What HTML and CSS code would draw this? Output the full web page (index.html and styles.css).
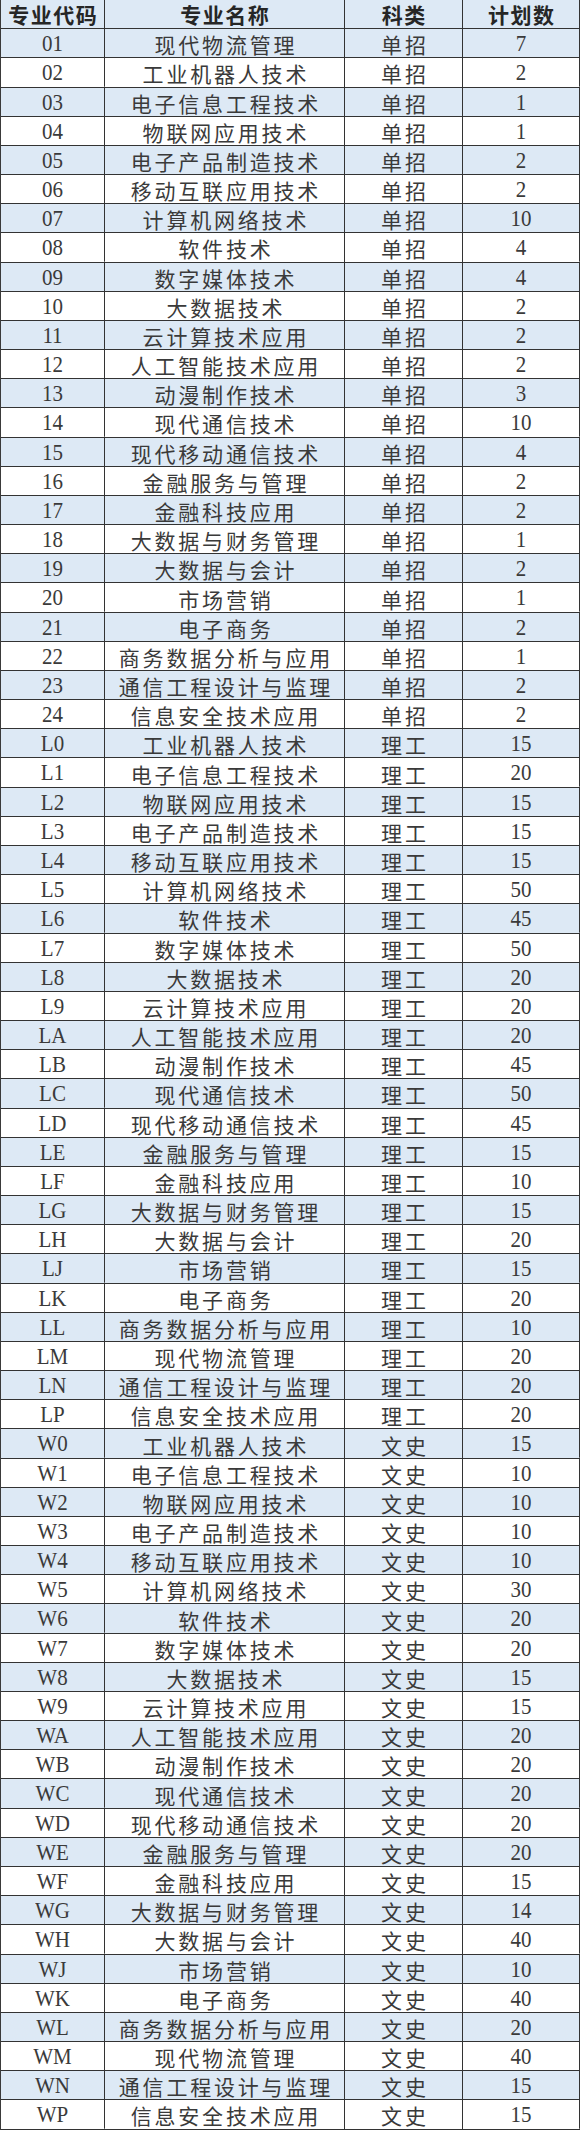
FILE: index.html
```html
<!DOCTYPE html>
<html lang="zh-CN">
<head>
<meta charset="utf-8">
<title>专业招生计划</title>
<link rel="stylesheet" href="styles.css">
</head>
<body>
<div class="sheet">
<div class="row head"><div class="c">专业代码</div><div class="c">专业名称</div><div class="c">科类</div><div class="c">计划数</div></div>
<div class="row"><div class="c n">01</div><div class="c">现代物流管理</div><div class="c">单招</div><div class="c n">7</div></div>
<div class="row"><div class="c n">02</div><div class="c">工业机器人技术</div><div class="c">单招</div><div class="c n">2</div></div>
<div class="row"><div class="c n">03</div><div class="c">电子信息工程技术</div><div class="c">单招</div><div class="c n">1</div></div>
<div class="row"><div class="c n">04</div><div class="c">物联网应用技术</div><div class="c">单招</div><div class="c n">1</div></div>
<div class="row"><div class="c n">05</div><div class="c">电子产品制造技术</div><div class="c">单招</div><div class="c n">2</div></div>
<div class="row"><div class="c n">06</div><div class="c">移动互联应用技术</div><div class="c">单招</div><div class="c n">2</div></div>
<div class="row"><div class="c n">07</div><div class="c">计算机网络技术</div><div class="c">单招</div><div class="c n">10</div></div>
<div class="row"><div class="c n">08</div><div class="c">软件技术</div><div class="c">单招</div><div class="c n">4</div></div>
<div class="row"><div class="c n">09</div><div class="c">数字媒体技术</div><div class="c">单招</div><div class="c n">4</div></div>
<div class="row"><div class="c n">10</div><div class="c">大数据技术</div><div class="c">单招</div><div class="c n">2</div></div>
<div class="row"><div class="c n">11</div><div class="c">云计算技术应用</div><div class="c">单招</div><div class="c n">2</div></div>
<div class="row"><div class="c n">12</div><div class="c">人工智能技术应用</div><div class="c">单招</div><div class="c n">2</div></div>
<div class="row"><div class="c n">13</div><div class="c">动漫制作技术</div><div class="c">单招</div><div class="c n">3</div></div>
<div class="row"><div class="c n">14</div><div class="c">现代通信技术</div><div class="c">单招</div><div class="c n">10</div></div>
<div class="row"><div class="c n">15</div><div class="c">现代移动通信技术</div><div class="c">单招</div><div class="c n">4</div></div>
<div class="row"><div class="c n">16</div><div class="c">金融服务与管理</div><div class="c">单招</div><div class="c n">2</div></div>
<div class="row"><div class="c n">17</div><div class="c">金融科技应用</div><div class="c">单招</div><div class="c n">2</div></div>
<div class="row"><div class="c n">18</div><div class="c">大数据与财务管理</div><div class="c">单招</div><div class="c n">1</div></div>
<div class="row"><div class="c n">19</div><div class="c">大数据与会计</div><div class="c">单招</div><div class="c n">2</div></div>
<div class="row"><div class="c n">20</div><div class="c">市场营销</div><div class="c">单招</div><div class="c n">1</div></div>
<div class="row"><div class="c n">21</div><div class="c">电子商务</div><div class="c">单招</div><div class="c n">2</div></div>
<div class="row"><div class="c n">22</div><div class="c">商务数据分析与应用</div><div class="c">单招</div><div class="c n">1</div></div>
<div class="row"><div class="c n">23</div><div class="c">通信工程设计与监理</div><div class="c">单招</div><div class="c n">2</div></div>
<div class="row"><div class="c n">24</div><div class="c">信息安全技术应用</div><div class="c">单招</div><div class="c n">2</div></div>
<div class="row"><div class="c n">L0</div><div class="c">工业机器人技术</div><div class="c">理工</div><div class="c n">15</div></div>
<div class="row"><div class="c n">L1</div><div class="c">电子信息工程技术</div><div class="c">理工</div><div class="c n">20</div></div>
<div class="row"><div class="c n">L2</div><div class="c">物联网应用技术</div><div class="c">理工</div><div class="c n">15</div></div>
<div class="row"><div class="c n">L3</div><div class="c">电子产品制造技术</div><div class="c">理工</div><div class="c n">15</div></div>
<div class="row"><div class="c n">L4</div><div class="c">移动互联应用技术</div><div class="c">理工</div><div class="c n">15</div></div>
<div class="row"><div class="c n">L5</div><div class="c">计算机网络技术</div><div class="c">理工</div><div class="c n">50</div></div>
<div class="row"><div class="c n">L6</div><div class="c">软件技术</div><div class="c">理工</div><div class="c n">45</div></div>
<div class="row"><div class="c n">L7</div><div class="c">数字媒体技术</div><div class="c">理工</div><div class="c n">50</div></div>
<div class="row"><div class="c n">L8</div><div class="c">大数据技术</div><div class="c">理工</div><div class="c n">20</div></div>
<div class="row"><div class="c n">L9</div><div class="c">云计算技术应用</div><div class="c">理工</div><div class="c n">20</div></div>
<div class="row"><div class="c n">LA</div><div class="c">人工智能技术应用</div><div class="c">理工</div><div class="c n">20</div></div>
<div class="row"><div class="c n">LB</div><div class="c">动漫制作技术</div><div class="c">理工</div><div class="c n">45</div></div>
<div class="row"><div class="c n">LC</div><div class="c">现代通信技术</div><div class="c">理工</div><div class="c n">50</div></div>
<div class="row"><div class="c n">LD</div><div class="c">现代移动通信技术</div><div class="c">理工</div><div class="c n">45</div></div>
<div class="row"><div class="c n">LE</div><div class="c">金融服务与管理</div><div class="c">理工</div><div class="c n">15</div></div>
<div class="row"><div class="c n">LF</div><div class="c">金融科技应用</div><div class="c">理工</div><div class="c n">10</div></div>
<div class="row"><div class="c n">LG</div><div class="c">大数据与财务管理</div><div class="c">理工</div><div class="c n">15</div></div>
<div class="row"><div class="c n">LH</div><div class="c">大数据与会计</div><div class="c">理工</div><div class="c n">20</div></div>
<div class="row"><div class="c n">LJ</div><div class="c">市场营销</div><div class="c">理工</div><div class="c n">15</div></div>
<div class="row"><div class="c n">LK</div><div class="c">电子商务</div><div class="c">理工</div><div class="c n">20</div></div>
<div class="row"><div class="c n">LL</div><div class="c">商务数据分析与应用</div><div class="c">理工</div><div class="c n">10</div></div>
<div class="row"><div class="c n">LM</div><div class="c">现代物流管理</div><div class="c">理工</div><div class="c n">20</div></div>
<div class="row"><div class="c n">LN</div><div class="c">通信工程设计与监理</div><div class="c">理工</div><div class="c n">20</div></div>
<div class="row"><div class="c n">LP</div><div class="c">信息安全技术应用</div><div class="c">理工</div><div class="c n">20</div></div>
<div class="row"><div class="c n">W0</div><div class="c">工业机器人技术</div><div class="c">文史</div><div class="c n">15</div></div>
<div class="row"><div class="c n">W1</div><div class="c">电子信息工程技术</div><div class="c">文史</div><div class="c n">10</div></div>
<div class="row"><div class="c n">W2</div><div class="c">物联网应用技术</div><div class="c">文史</div><div class="c n">10</div></div>
<div class="row"><div class="c n">W3</div><div class="c">电子产品制造技术</div><div class="c">文史</div><div class="c n">10</div></div>
<div class="row"><div class="c n">W4</div><div class="c">移动互联应用技术</div><div class="c">文史</div><div class="c n">10</div></div>
<div class="row"><div class="c n">W5</div><div class="c">计算机网络技术</div><div class="c">文史</div><div class="c n">30</div></div>
<div class="row"><div class="c n">W6</div><div class="c">软件技术</div><div class="c">文史</div><div class="c n">20</div></div>
<div class="row"><div class="c n">W7</div><div class="c">数字媒体技术</div><div class="c">文史</div><div class="c n">20</div></div>
<div class="row"><div class="c n">W8</div><div class="c">大数据技术</div><div class="c">文史</div><div class="c n">15</div></div>
<div class="row"><div class="c n">W9</div><div class="c">云计算技术应用</div><div class="c">文史</div><div class="c n">15</div></div>
<div class="row"><div class="c n">WA</div><div class="c">人工智能技术应用</div><div class="c">文史</div><div class="c n">20</div></div>
<div class="row"><div class="c n">WB</div><div class="c">动漫制作技术</div><div class="c">文史</div><div class="c n">20</div></div>
<div class="row"><div class="c n">WC</div><div class="c">现代通信技术</div><div class="c">文史</div><div class="c n">20</div></div>
<div class="row"><div class="c n">WD</div><div class="c">现代移动通信技术</div><div class="c">文史</div><div class="c n">20</div></div>
<div class="row"><div class="c n">WE</div><div class="c">金融服务与管理</div><div class="c">文史</div><div class="c n">20</div></div>
<div class="row"><div class="c n">WF</div><div class="c">金融科技应用</div><div class="c">文史</div><div class="c n">15</div></div>
<div class="row"><div class="c n">WG</div><div class="c">大数据与财务管理</div><div class="c">文史</div><div class="c n">14</div></div>
<div class="row"><div class="c n">WH</div><div class="c">大数据与会计</div><div class="c">文史</div><div class="c n">40</div></div>
<div class="row"><div class="c n">WJ</div><div class="c">市场营销</div><div class="c">文史</div><div class="c n">10</div></div>
<div class="row"><div class="c n">WK</div><div class="c">电子商务</div><div class="c">文史</div><div class="c n">40</div></div>
<div class="row"><div class="c n">WL</div><div class="c">商务数据分析与应用</div><div class="c">文史</div><div class="c n">20</div></div>
<div class="row"><div class="c n">WM</div><div class="c">现代物流管理</div><div class="c">文史</div><div class="c n">40</div></div>
<div class="row"><div class="c n">WN</div><div class="c">通信工程设计与监理</div><div class="c">文史</div><div class="c n">15</div></div>
<div class="row"><div class="c n">WP</div><div class="c">信息安全技术应用</div><div class="c">文史</div><div class="c n">15</div></div>
</div>
</body>
</html>
```
FILE: styles.css
```css
html, body {
  margin: 0;
  padding: 0;
  background: #ffffff;
}
.sheet {
  width: 580px;
  display: flex;
  flex-direction: column;
  border-left: 1px solid #3a3a3a;
  box-sizing: border-box;
}
.row {
  display: grid;
  grid-template-columns: 104px 240px 118px 117px;
  height: 29.178px;
  box-sizing: border-box;
  border-bottom: 1.5px solid #333333;
  background: #ffffff;
}
.row:nth-child(even) {
  background: #dde9f5;
}
.row.head {
  background: #dde9f5;
}
.c {
  display: flex;
  align-items: center;
  justify-content: center;
  border-right: 1.5px solid #333333;
  font-family: "Noto Sans CJK SC", "Liberation Sans", sans-serif;
  font-size: 21px;
  letter-spacing: 2.8px;
  text-indent: 2.8px;
  color: #3a3a3a;
  padding-top: 3px;
  box-sizing: border-box;
  white-space: nowrap;
  line-height: 1;
}
.c.n {
  font-family: "Liberation Serif", "Noto Sans CJK SC", serif;
  font-size: 21px;
  letter-spacing: 0;
  text-indent: 0;
  transform: scaleY(1.05);
}
.head .c {
  font-weight: 700;
  font-size: 21px;
  letter-spacing: 1.5px;
  text-indent: 1.5px;
  color: #262626;
  padding-top: 0;
}
```
